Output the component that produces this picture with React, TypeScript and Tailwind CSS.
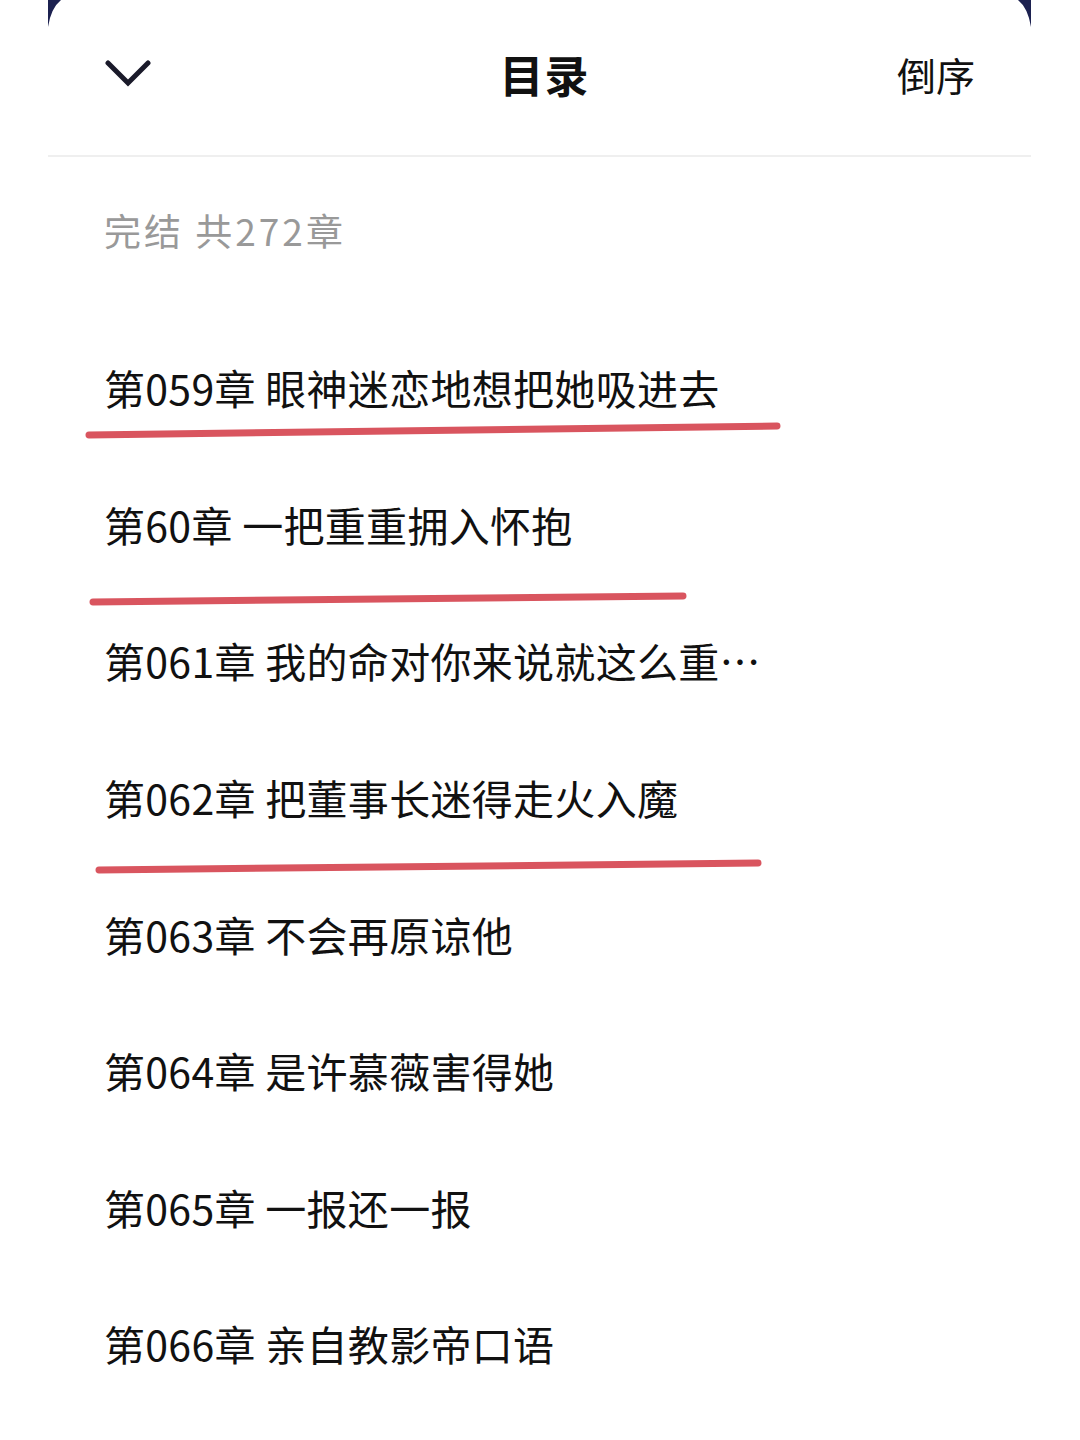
import React from "react";

const rows = [
  "第059章 眼神迷恋地想把她吸进去",
  "第60章 一把重重拥入怀抱",
  "第061章 我的命对你来说就这么重…",
  "第062章 把董事长迷得走火入魔",
  "第063章 不会再原谅他",
  "第064章 是许慕薇害得她",
  "第065章 一报还一报",
  "第066章 亲自教影帝口语",
];

export default function App() {
  return (
    <div
      className="relative w-[1080px] h-[1440px] bg-white overflow-hidden"
      style={{ fontFamily: '"Noto Sans CJK SC", "Noto Sans", sans-serif' }}
    >
      <div className="mx-[48px] w-[983px]">
        <div className="h-[157px] grid grid-cols-[1fr_auto_1fr] items-center pb-[7px] pl-[57px] pr-[56px] border-b-2 border-[#efefef]">
          <div className="flex justify-start">
            <svg width="46" height="30" viewBox="0 0 46 30" className="shrink-0">
              <path d="M3 4 L23 24 L43 4" fill="none" stroke="#1a1a2a" strokeWidth="5" strokeLinecap="round" strokeLinejoin="miter" />
            </svg>
          </div>
          <div className="text-[44px] font-semibold text-[#111] leading-none tracking-[1px] pl-[9px]">目录</div>
          <div className="flex justify-end text-[39px] text-[#111] leading-none">倒序</div>
        </div>
        <div className="h-[164px] pt-[48px] pl-[56px]">
          <div className="text-[37px] leading-[50px] text-[#999] tracking-[3px]">完结 共272章</div>
        </div>
        <div className="pl-[56px]">
          {rows.map((r) => (
            <div key={r} className="h-[136.6px] flex items-center">
              <div className="text-[41px] leading-none text-[#111] whitespace-nowrap tracking-[0.3px] -mt-[3px]">{r}</div>
            </div>
          ))}
        </div>
      </div>
      <svg className="absolute inset-0 pointer-events-none" width="1080" height="1440">
        <path d="M48 0 L61 0 Q51 8 48 27 Z" fill="#1c2150" />
        <path d="M1031 0 L1018 0 Q1028 8 1031 27 Z" fill="#1c2150" />
        <line x1="89" y1="435" x2="777" y2="426" stroke="#d9555f" strokeWidth="7" strokeLinecap="round" />
        <line x1="93" y1="602" x2="683" y2="596" stroke="#d9555f" strokeWidth="7" strokeLinecap="round" />
        <line x1="99" y1="870" x2="758" y2="863" stroke="#d9555f" strokeWidth="7" strokeLinecap="round" />
      </svg>
    </div>
  );
}
